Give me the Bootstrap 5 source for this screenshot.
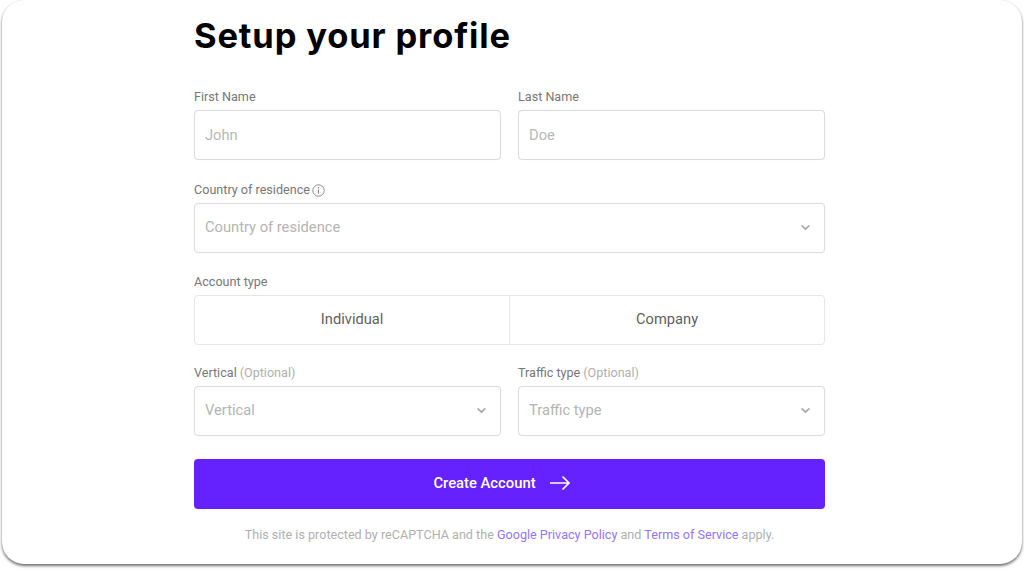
<!DOCTYPE html>
<html lang="en">
<head>
<meta charset="utf-8">
<title>Setup your profile</title>
<link href="https://cdn.jsdelivr.net/npm/bootstrap@5.3.0/dist/css/bootstrap.min.css" rel="stylesheet">
<style>
html, body { height: 570px; overflow: hidden; background: #fff; }
body { font-family: Roboto, "Liberation Sans", sans-serif; padding: 0 2px 5px 2px; }
.app-frame { height: 564px; background: #fff; border-radius: 22px; box-shadow: 0 2px 3px rgba(0,0,0,.55), 0 0 1px rgba(0,0,0,.16); }
.form-wrap { width: 631px; margin-left: 192px; padding-top: 12px; }
.page-title { font-family: Inter, "Liberation Sans", sans-serif; font-weight: 700; font-size: 34.5px; line-height: 48px; color: #000; margin: 0 0 28px; letter-spacing: .85px; }
.field-label { font-size: 12.6px; line-height: 16px; color: #777; padding-top: 1px; margin-bottom: 5px; display: flex; align-items: center; gap: 3px; }
.field-label span { color: #b0b0b0; }
.form-control.field-input, .form-select.field-input { height: 50px; font-size: 14.7px; color: #555; border: 1px solid #dcdcdc; border-radius: 4px; padding: 0 10px 1px; box-shadow: 0 0 1px rgba(0,0,0,.08); }
.form-select.field-input { color: #b4b4b4; padding-right: 30px; padding-bottom: 2px; background-size: 11px 9px; background-position: right 13px top 19px; --bs-form-select-bg-img: url("data:image/svg+xml,%3csvg xmlns='http://www.w3.org/2000/svg' viewBox='0 0 16 16'%3e%3cpath fill='none' stroke='%23a8a8a8' stroke-linecap='round' stroke-linejoin='round' stroke-width='3' d='m2 5 6 6 6-6'/%3e%3c/svg%3e"); }
.field-input::placeholder { color: #b8b8b8; opacity: 1; }
.gutter-row { --bs-gutter-x: 17px; --bs-gutter-y: 0; }
.block-gap { margin-bottom: 21px; }
.block-gap-md { margin-bottom: 20px; }
.block-gap-sm { margin-bottom: 19px; }
.type-group .btn { height: 50px; font-size: 14.7px; color: #5f5f5f; background: #fff; border: 1px solid #e6e6e6; display: flex; align-items: center; justify-content: center; border-radius: 4px; padding: 0 12px 2px; }
.type-group .btn + .btn { margin-left: -1px; }
.type-group .btn:hover { background: #f8f8f8; color: #555; }
.btn.cta-btn { height: 50px; width: 100%; background: #6621ff; border: 0; border-radius: 4px; color: #fff; font-size: 14.8px; font-weight: 500; margin-top: 23px; gap: 13px; padding: 0 15px 2px 0; }
.legal-text { font-size: 12.6px; line-height: 16px; color: #b0b0b0; text-align: center; margin: 18px 0 0; white-space: nowrap; }
.legal-text a { color: #9475f5; text-decoration: none; }
.info-ico { display: block; margin-left: -1px; }
</style>
</head>
<body>
<div class="app-frame">
  <form class="form-wrap">
    <h1 class="page-title">Setup your profile</h1>
    <div class="row gutter-row block-gap">
      <div class="col-6">
        <label class="field-label" for="fn">First Name</label>
        <input id="fn" class="form-control field-input" type="text" placeholder="John">
      </div>
      <div class="col-6">
        <label class="field-label" for="ln">Last Name</label>
        <input id="ln" class="form-control field-input" type="text" placeholder="Doe">
      </div>
    </div>
    <div class="block-gap-md">
      <label class="field-label" for="cr">Country of residence
        <svg class="info-ico" width="13" height="13" viewBox="0 0 13 13" aria-hidden="true"><circle cx="6.500" cy="6.500" r="5.700" fill="none" stroke="#8a8a8a" stroke-width="1"/><path d="M6.500 5.600v4" stroke="#8a8a8a" stroke-width="1.200"/><circle cx="6.500" cy="3.800" r=".8" fill="#8a8a8a"/></svg>
      </label>
      <select id="cr" class="form-select field-input"><option>Country of residence</option></select>
    </div>
    <div class="block-gap-sm">
      <div class="field-label">Account type</div>
      <div class="btn-group w-100 type-group" role="group" aria-label="Account type">
        <button type="button" class="btn">Individual</button>
        <button type="button" class="btn">Company</button>
      </div>
    </div>
    <div class="row gutter-row">
      <div class="col-6">
        <label class="field-label" for="vt">Vertical <span>(Optional)</span></label>
        <select id="vt" class="form-select field-input"><option>Vertical</option></select>
      </div>
      <div class="col-6">
        <label class="field-label" for="tt">Traffic type <span>(Optional)</span></label>
        <select id="tt" class="form-select field-input"><option>Traffic type</option></select>
      </div>
    </div>
    <button type="button" class="btn cta-btn d-flex align-items-center justify-content-center">
      Create Account
      <svg width="22" height="16" viewBox="0 0 22 16" aria-hidden="true"><path d="M1 8h19M13.500 1.500 20 8l-6.500 6.500" fill="none" stroke="#fff" stroke-width="1.700"/></svg>
    </button>
    <p class="legal-text">This site is protected by reCAPTCHA and the <a href="#">Google Privacy Policy</a> and <a href="#">Terms of Service</a> apply.</p>
  </form>
</div>
<script src="https://cdn.jsdelivr.net/npm/bootstrap@5.3.0/dist/js/bootstrap.bundle.min.js"></script>
</body>
</html>
